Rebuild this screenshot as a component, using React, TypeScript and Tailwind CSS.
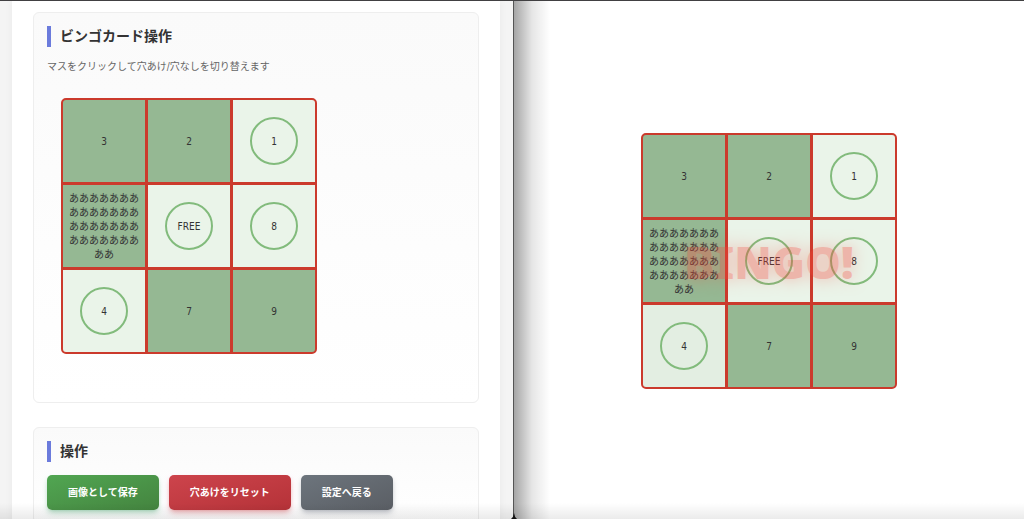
import { useState } from 'react';

interface Cell {
    id: number;
    label: string;
    open: boolean;
}

const initialCells: Cell[] = [
    { id: 1, label: '3', open: false },
    { id: 2, label: '2', open: false },
    { id: 3, label: '1', open: true },
    { id: 4, label: 'あ'.repeat(30), open: false },
    { id: 5, label: 'FREE', open: true },
    { id: 6, label: '8', open: true },
    { id: 7, label: '4', open: true },
    { id: 8, label: '7', open: false },
    { id: 9, label: '9', open: false },
];

const boardClass =
    'grid w-64 grid-cols-3 gap-[3px] overflow-hidden rounded-[5px] border-2 border-[#cb3a2c] bg-[#cb3a2c]';

const cellClass =
    'relative flex aspect-square items-center justify-center px-1.5 pt-px text-center text-[10px] leading-[14px] break-all text-[#333333]';

function cellColor(open: boolean, latest = false) {
    if (latest) return 'bg-[#e3eee2]';
    return open ? 'bg-[#eaf4e9]' : 'bg-[#95b893]';
}

function Hole() {
    return <span className="absolute inset-0 m-auto size-12 rounded-full border-2 border-[#82bb7c]" />;
}

function SectionTitle({ children }: { children: string }) {
    return (
        <h2 className="border-l-4 border-[#6b7bdc] pl-[9px] text-sm leading-[21px] font-bold text-[#333333]">
            {children}
        </h2>
    );
}

function ControlBoard({ cells, onToggle }: { cells: Cell[]; onToggle: (id: number) => void }) {
    return (
        <div className={boardClass}>
            {cells.map((cell) => (
                <button
                    key={cell.id}
                    type="button"
                    aria-pressed={cell.open}
                    onClick={() => onToggle(cell.id)}
                    className={`${cellClass} ${cellColor(cell.open)}`}
                >
                    {cell.open && <Hole />}
                    <span>{cell.label}</span>
                </button>
            ))}
        </div>
    );
}

function DisplayBoard({ cells, latestId }: { cells: Cell[]; latestId: number | null }) {
    return (
        <div className="relative">
            <div className={boardClass}>
                {cells.map((cell) => (
                    <div
                        key={cell.id}
                        className={`${cellClass} ${cellColor(cell.open, cell.open && cell.id === latestId)}`}
                    >
                        {cell.open && <Hole />}
                        <span>{cell.label}</span>
                    </div>
                ))}
            </div>
            <div className="pointer-events-none absolute inset-0 flex items-center justify-center font-['Noto_Sans',sans-serif] text-[45px] leading-none font-black text-[#f44336] opacity-35 [text-shadow:0_0_16px_#f44336]">
                BINGO!
            </div>
        </div>
    );
}

const actionClass =
    'rounded-[5px] bg-linear-to-br px-[21px] py-2.5 text-[10px] leading-[15px] font-bold text-white shadow-md';

export default function App() {
    const [cells, setCells] = useState(initialCells);
    const [latestId, setLatestId] = useState<number | null>(7);

    const toggle = (id: number) => {
        setCells(cells.map((c) => (c.id === id ? { ...c, open: !c.open } : c)));
        setLatestId(id);
    };

    const reset = () => {
        setCells(cells.map((c) => ({ ...c, open: c.label === 'FREE' })));
        setLatestId(null);
    };

    return (
        <div className="relative grid h-screen grid-cols-[514fr_510fr] overflow-hidden border-t border-[#414042] bg-white font-['DejaVu_Sans_Condensed','Noto_Sans_CJK_JP',sans-serif]">
            <div className="overflow-hidden border-r border-[#555555] bg-[#f4f4f4] pr-[13px] pl-3">
                <main className="min-h-full bg-white px-[21px] pt-[11px] shadow-[0_0_8px_rgba(0,0,0,0.05)]">
                    <section className="rounded-md border border-[#eeeeee] bg-linear-to-b from-[#fafafa] to-white px-[13px] pt-[13px] pb-12">
                        <SectionTitle>ビンゴカード操作</SectionTitle>
                        <p className="mt-3 text-[10px] leading-4 text-[#666666]">
                            マスをクリックして穴あけ/穴なしを切り替えます
                        </p>
                        <div className="mt-[23px] ml-3.5">
                            <ControlBoard cells={cells} onToggle={toggle} />
                        </div>
                    </section>

                    <section className="mt-6 rounded-md border border-[#eeeeee] bg-linear-to-b from-[#fafafa] to-white px-[13px] py-[13px]">
                        <SectionTitle>操作</SectionTitle>
                        <div className="mt-[13px] flex gap-2.5">
                            <button type="button" className={`${actionClass} from-[#51a652] to-[#44843f] shadow-green-700/25`}>
                                画像として保存
                            </button>
                            <button
                                type="button"
                                onClick={reset}
                                className={`${actionClass} from-[#cd444c] to-[#b53238] shadow-red-700/25`}
                            >
                                穴あけをリセット
                            </button>
                            <button type="button" className={`${actionClass} from-[#6d757d] to-[#5a5e64] shadow-gray-700/25`}>
                                設定へ戻る
                            </button>
                        </div>
                    </section>
                </main>
            </div>

            <div className="relative flex items-center justify-center overflow-hidden pt-0.5">
                <div className="pointer-events-none absolute inset-y-0 left-0 w-9 bg-linear-to-r from-black/35 via-black/10 to-transparent" />
                <DisplayBoard cells={cells} latestId={latestId} />
            </div>

            {/* window edge shadow */}
            <div className="pointer-events-none absolute inset-x-0 bottom-0 grid h-4 grid-cols-[514fr_510fr] bg-linear-to-t from-black/8 to-transparent">
                <svg viewBox="0 0 6 6" className="-mr-[3px] size-1.5 self-end justify-self-end">
                    <path d="M3 0 Q3.5 4 6 6 H0 Q2.5 4 3 0Z" fill="#111111" />
                </svg>
            </div>
        </div>
    );
}
